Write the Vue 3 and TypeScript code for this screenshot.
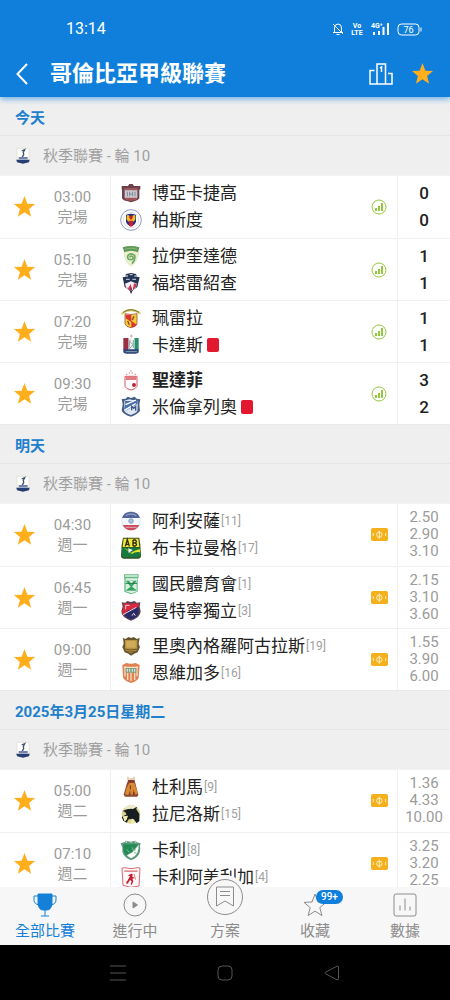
<script setup lang="ts">
import { ref } from 'vue'

interface Shape {
  d: string
  fill?: string
  stroke?: string
  width?: number
}

interface Team {
  name: string
  crest: string
  rank?: number
  score?: number
  redCard?: boolean
  winner?: boolean
}

interface Match {
  id: number
  time: string
  status: string
  home: Team
  away: Team
  odds?: string[]
}

interface Day {
  title: string
  matches: Match[]
}

const days: Day[] = [
  {
    title: '今天',
    matches: [
      { id: 1, time: '03:00', status: '完場', home: { name: '博亞卡捷高', crest: 'chico', score: 0 }, away: { name: '柏斯度', crest: 'pasto', score: 0 } },
      { id: 2, time: '05:10', status: '完場', home: { name: '拉伊奎達德', crest: 'equidad', score: 1 }, away: { name: '福塔雷紹查', crest: 'fortaleza', score: 1 } },
      { id: 3, time: '07:20', status: '完場', home: { name: '珮雷拉', crest: 'pereira', score: 1 }, away: { name: '卡達斯', crest: 'caldas', score: 1, redCard: true } },
      { id: 4, time: '09:30', status: '完場', home: { name: '聖達菲', crest: 'santafe', score: 3, winner: true }, away: { name: '米倫拿列奧', crest: 'millonarios', score: 2, redCard: true } },
    ],
  },
  {
    title: '明天',
    matches: [
      { id: 5, time: '04:30', status: '週一', home: { name: '阿利安薩', crest: 'alianza', rank: 11 }, away: { name: '布卡拉曼格', crest: 'bucaramanga', rank: 17 }, odds: ['2.50', '2.90', '3.10'] },
      { id: 6, time: '06:45', status: '週一', home: { name: '國民體育會', crest: 'nacional', rank: 1 }, away: { name: '曼特寧獨立', crest: 'medellin', rank: 3 }, odds: ['2.15', '3.10', '3.60'] },
      { id: 7, time: '09:00', status: '週一', home: { name: '里奧內格羅阿古拉斯', crest: 'aguilas', rank: 19 }, away: { name: '恩維加多', crest: 'envigado', rank: 16 }, odds: ['1.55', '3.90', '6.00'] },
    ],
  },
  {
    title: '2025年3月25日星期二',
    matches: [
      { id: 8, time: '05:00', status: '週二', home: { name: '杜利馬', crest: 'tolima', rank: 9 }, away: { name: '拉尼洛斯', crest: 'llaneros', rank: 15 }, odds: ['1.36', '4.33', '10.00'] },
      { id: 9, time: '07:10', status: '週二', home: { name: '卡利', crest: 'cali', rank: 8 }, away: { name: '卡利阿美利加', crest: 'america', rank: 4 }, odds: ['3.25', '3.20', '2.25'] },
    ],
  },
]

const circle = (x: number, y: number, r: number): string =>
  `M${x - r} ${y}a${r} ${r} 0 1 0 ${r * 2} 0a${r} ${r} 0 1 0 ${-r * 2} 0z`

const crests: Record<string, Shape[]> = {
  chico: [
    { d: 'M5 12h19l4-6h10l4 6h19v9l-3 3v25q-4 7-13 8l-12 4-12-4q-12-1-15-8V24l-1-3z', fill: '#70404a' },
    { d: 'M14 20h38v28q-3 5-19 7-16-2-19-7z', fill: '#c9ccd2' },
    { d: 'M14 20h38v5H14zM14 47h38q-3 7-19 9-16-2-19-9z', fill: '#a35156' },
    { d: 'M22 29v14M29 29v14M38 29v14M45 29v14M29 36h9', stroke: '#7d8798', width: 3 },
  ],
  pasto: [
    { d: circle(33, 33, 31), fill: '#fff', stroke: '#8d9ac0', width: 3 },
    { d: circle(33, 33, 23), stroke: '#c9d0e4', width: 2 },
    { d: 'M18 18q15-7 30 0v20q-4 11-15 14-11-3-15-14z', fill: '#23337f' },
    { d: 'M20 19h7l6 9 6-9h7v12q-4 9-13 9t-13-9z', fill: '#f2c21d' },
    { d: 'M28 20h10v7l-5 6-5-6zM27 35h12v15l-6 3-6-3z', fill: '#c81f37' },
  ],
  equidad: [
    { d: 'M12 20Q15 54 33 63q17-7 23-42-21-8-44-1z', fill: '#eef1cf', stroke: '#d8dfb2', width: 2 },
    { d: 'M8 7q24-8 50 0l-4 15q-21-9-41 0z', fill: '#5e9a58' },
    { d: 'M15 12q17-5 36 0', stroke: '#a1c490', width: 2 },
    { d: 'M42 30q-12-8-19 3-1 12 10 11 9-2 5-9-6-4-9 2M43 29q6 12-7 27', stroke: '#6eaa65', width: 5 },
  ],
  fortaleza: [
    { d: 'M18 6l15-3 15 3 3 8 8 2-4 16-3 13-13 10-6 9-5-9-14-10-6-29 9-2z', fill: '#243451' },
    { d: 'M15 12h9M29 8h9M43 12h9M18 22h11M37 22h11', stroke: '#a7b9d5', width: 4 },
    { d: 'M15 35l18-7 18 7-4 13-14 9-14-9z', fill: '#f4eff4' },
    { d: 'M15 41l9 8 8-13 4 16-3 7M42 34l9 2-5 12-8 5z', fill: '#cd3853' },
    { d: 'M33 47v18', stroke: '#3b4962', width: 3 },
  ],
  pereira: [
    { d: 'M2 19Q32-7 64 19l-5 3Q31 3 6 23z', fill: '#d4cd69' },
    { d: 'M10 16Q32 0 57 16', stroke: '#776a34', width: 3 },
    { d: 'M15 20q18 5 36 0v31q-3 9-18 11-15-2-18-11z', fill: '#f3cd2f', stroke: '#8f3437', width: 2 },
    { d: 'M17 23l17 1v17l16 12q-3 6-16 8V45L17 34z', fill: '#d93638' },
    { d: 'M42 28l-5 11M23 42l5 11', stroke: '#8e3e32', width: 4 },
  ],
  caldas: [
    { d: 'M10 12h16v36H10z', fill: '#9b3044' },
    { d: 'M43 12h13v36H43z', fill: '#288e6e' },
    { d: 'M26 13h17v34H26z', fill: '#f1f3f1' },
    { d: 'M10 46h46v9q-2 4-10 4H20q-8 0-10-4z', fill: '#2f407c' },
    { d: 'M27 20l12 12-12 14M40 18v24M30 17l-3 24M17 53h34', stroke: '#83a8a7', width: 3 },
    { d: 'M34 2v9M30 6h8', stroke: '#ca8a91', width: 2 },
  ],
  santafe: [
    { d: 'M15 22h36v30q-3 8-18 11-15-3-18-11z', fill: '#fff', stroke: '#d55962', width: 3 },
    { d: 'M17 24h32v9H17z', fill: '#e07c82' },
    { d: circle(42, 48, 6), fill: '#b72938' },
    { d: 'M18 16h4M26 12h4M35 12h4M44 16h4M33 3v5M25 28v4M33 28v4M41 28v4', stroke: '#df7a80', width: 3 },
  ],
  millonarios: [
    { d: 'M5 9l12-1 6-6 10 4 11-4 6 6 11 2-3 15 2 20q-7 10-27 17Q12 56 5 44l3-19z', fill: '#465d86' },
    { d: 'M13 14l15-4 26 6-2 30q-5 7-19 11-15-4-20-13z', fill: '#dfe8f4' },
    { d: 'M15 15h38v8L17 44l-5-2 4-18z', fill: '#4b70ac' },
    { d: 'M17 26l31-14M13 43l34-20', stroke: '#fff', width: 4 },
    { d: 'M35 43v-12l6 6 6-6v13', stroke: '#3b5889', width: 4 },
  ],
  alianza: [
    { d: circle(33, 33, 28), fill: '#f5f8fb', stroke: '#d3dce8', width: 2 },
    { d: 'M6 24Q12 5 33 5t27 19z', fill: '#51649b' },
    { d: 'M8 45h50q-8 16-25 16T8 45z', fill: '#cf4b57' },
    { d: 'M17 17q16-10 32 0M17 52h33', stroke: '#d8deec', width: 2 },
    { d: circle(33, 33, 7), fill: '#aac3dc', stroke: '#6785ac', width: 2 },
  ],
  bucaramanga: [
    { d: 'M9 2h49l3 21 2 34q-1 8-9 8H12q-8 0-9-8l2-34z', fill: '#35511f' },
    { d: 'M11 5h44l3 25H8z', fill: '#f3e532' },
    { d: 'M7 32h52l2 25q-2 4-7 4H12q-5 0-7-4z', fill: '#167b40' },
    { d: 'M7 33q16 0 28 18 12-8 25-5v-9q-20 4-28 12Q20 35 7 33z', fill: '#ece12f' },
    { d: 'M16 28l6-20 6 20M17 22h10M39 9v18M39 9h7q6 4 0 9h-7M46 18q7 5 0 9h-7', stroke: '#272b1d', width: 4 },
    { d: 'M25 34l13 5-12 9z', fill: '#fff' },
  ],
  nacional: [
    { d: 'M12 4h44v10h-3v42l-20 8-20-8V14h-1z', fill: '#65b982' },
    { d: 'M15 7h38v4H15zM17 16h34v39l-17 6-17-6z', fill: '#dbf0e2' },
    { d: 'M18 23h32v30H18z', fill: '#33a261' },
    { d: 'M18 23l14 18-14 11zM50 23L36 41l14 11zM27 23h14l-7 12z', fill: '#d9eddc' },
    { d: 'M17 31h34', stroke: '#197c44', width: 3 },
  ],
  medellin: [
    { d: 'M5 7l11 1 6-5 11 3 11-3 6 5 11-1-2 13 3 14q0 18-29 28Q4 52 4 34L8 20z', fill: '#594052' },
    { d: 'M9 10h15l9 3 9-3h15l-2 12 1 15-30-7-17 14q-5-10 2-25z', fill: '#d8293f' },
    { d: 'M56 21v17q-4 14-23 20-13-4-19-12l12-15z', fill: '#272b68' },
    { d: 'M17 16h12M17 16v12M9 44l40-22M36 47l5-7 5 7', stroke: '#f7d4d9', width: 3 },
  ],
  aguilas: [
    { d: 'M9 8l7 4 10-6 7 3 8-3 10 6 8-4-3 19 4 9-7 16q-11 4-20 10-8-7-19-10L7 36l4-10z', fill: '#66552c' },
    { d: 'M15 15h37v28q-2 7-19 12-17-5-18-12z', fill: '#b99243' },
    { d: 'M19 18h28v20H19z', fill: '#d0ad5a' },
    { d: 'M13 42q18 6 40 0M17 49q14 4 30 0', stroke: '#6b5526', width: 3 },
  ],
  envigado: [
    { d: 'M7 9l12-6q14 4 28 0l12 6-3 38q-2 9-23 16Q11 56 9 46z', fill: '#df8153' },
    { d: 'M12 16h42M15 13v30M33 30v28M51 13v30M23 32v22M44 32v22', stroke: '#f5dfc0', width: 4 },
    { d: 'M17 18h32v14H17z', fill: '#7ca28a' },
    { d: 'M22 21v8M29 21v8M37 21v8M44 21v8', stroke: '#edf0df', width: 3 },
  ],
  tolima: [
    { d: 'M25 12h18l3 9 9 36-3 5H15l-4-6 10-35z', fill: '#8d4a30' },
    { d: 'M28 21l-8 14-5 20 10 2 5-14 3 14 7-2-1-16 7 17 8-4-11-31z', fill: '#d98a33' },
    { d: 'M24 14q10 6 19 0M31 28v12M41 48v9', stroke: '#7b2c2b', width: 3 },
    { d: 'M24 2v10M42 2v10M28 9h11', stroke: '#d7a071', width: 3 },
  ],
  llaneros: [
    { d: circle(33, 34, 28), fill: '#d9d78d' },
    { d: 'M15 13q18-15 38 2l-8 9-27-1z', fill: '#eceacc' },
    { d: 'M8 24q16-8 31-6l12-7-2 8 9 14v21l-8 7-9-13-15 1-6 10-10-6-5-11 15-8-5-7z', fill: '#171d20' },
    { d: 'M8 40l16-2-4 12-6 6zM36 46l9 13-14 3z', fill: '#f2ebac' },
  ],
  cali: [
    { d: 'M2 13l13-4 2-4 15 3 15-3 3 5 12 3-2 8q5 32-27 43Q3 53 7 25z', fill: '#5b997d' },
    { d: 'M10 16h44l-18 24-19 9Q8 37 10 16z', fill: '#238c54' },
    { d: 'M56 18q2 29-22 40-8-3-13-9l16-9z', fill: '#fafdf9' },
    { d: 'M19 5v7M33 5v7M46 5v7', stroke: '#c8ddd1', width: 3 },
    { d: 'M36 25l5 11M42 41l7 1M20 31l8 9M47 31l-4 6', stroke: '#8cb8a2', width: 3 },
  ],
  america: [
    { d: 'M6 6l8-1 19 3 20-3 7 1-3 54-24 4L9 58z', fill: '#fff8f8', stroke: '#d36b72', width: 3 },
    { d: 'M13 13h40v5H13z', fill: '#df8b91' },
    { d: 'M33 23l5 1-1 8 8 4-8 2 3 8-5 11-3-2 3-9-5-4-7 11-5-1 9-16 3-6-7-1z', fill: '#c51f2f' },
    { d: 'M42 24l5 17M19 46l3 8', stroke: '#ca5059', width: 2 },
  ],
}

const starPath = 'M12 1l3 8 8 .4-6.200 5.200 2.100 8L12 18.100 5.100 22.600l2.100-8L1 9.400 9 9z'

const favourites = ref<Set<number>>(new Set(days.flatMap((day) => day.matches.map((m) => m.id))))
const leagueFavourite = ref(true)
const activeTab = ref('all')

function toggle(id: number): void {
  const next = new Set(favourites.value)
  if (next.has(id)) next.delete(id)
  else next.add(id)
  favourites.value = next
}

const tabs = [
  { id: 'all', label: '全部比賽' },
  { id: 'live', label: '進行中' },
  { id: 'plan', label: '方案' },
  { id: 'saved', label: '收藏' },
  { id: 'data', label: '數據' },
]
</script>

<template>
  <div class="screen">
    <header class="header">
      <div class="status">
        <time class="clock">13:14</time>
        <div class="indicators">
          <svg class="bell" viewBox="0 0 12 14" aria-hidden="true">
            <path d="M2.500 10V6q0-4 3.500-4t3.500 4v4M1 10.500h10M4.500 12.500h3M1 2l10 10" />
          </svg>
          <svg class="volte" viewBox="0 0 12 14" aria-hidden="true">
            <text x="6" y="6" text-anchor="middle">Vo</text>
            <text x="6" y="13" text-anchor="middle">LTE</text>
          </svg>
          <svg class="signal" viewBox="0 0 20 14" aria-hidden="true">
            <text x="1" y="6">4G⁺</text>
            <path d="M4 13v-3M9 13V9M13.500 13V5M18 13V1" />
          </svg>
          <svg class="battery" viewBox="0 0 25 13" aria-hidden="true">
            <rect x="1" y="1" width="21" height="11" rx="3.500" />
            <path d="M24 4.500v4" />
            <text x="11.500" y="10" text-anchor="middle">76</text>
          </svg>
        </div>
      </div>
      <div class="app-bar">
        <button class="icon-button back" type="button" aria-label="返回">
          <svg viewBox="0 0 12 22"><path d="M11 1L1.500 11 11 21" /></svg>
        </button>
        <h1>哥倫比亞甲級聯賽</h1>
        <button class="icon-button podium" type="button" aria-label="積分榜">
          <svg viewBox="0 0 24 22">
            <path d="M8 21V1h8.500v20M5.500 7.500H1V21h22V10.500h-4M11 5l1.500-1v5" />
          </svg>
        </button>
        <button
          class="icon-button star"
          :class="{ off: !leagueFavourite }"
          type="button"
          aria-label="收藏聯賽"
          :aria-pressed="leagueFavourite"
          @click="leagueFavourite = !leagueFavourite"
        >
          <svg viewBox="0 0 24 24"><path :d="starPath" /></svg>
        </button>
      </div>
    </header>

    <main class="feed">
      <section v-for="day in days" :key="day.title">
        <h2>{{ day.title }}</h2>
        <h3>
          <svg class="league-logo" viewBox="0 0 42 51" aria-hidden="true">
            <path d="M3 4h36v36H3z" fill="#fff" stroke="#dddccb" stroke-width="2" />
            <path d="M17 12l9-4-4 8 1 7-5 9" fill="none" stroke="#43546d" stroke-width="4" />
            <path d="M8 30h27v7H8z" fill="#7182ab" stroke="none" />
            <path d="M1 38h40l-2 8-18 4-18-4z" fill="#273e75" stroke="none" />
          </svg>
          秋季聯賽 - 輪 10
        </h3>
        <ul class="matches">
          <li v-for="match in day.matches" :key="match.id" class="match">
            <button
              class="icon-button star"
              :class="{ off: !favourites.has(match.id) }"
              type="button"
              aria-label="收藏比賽"
              :aria-pressed="favourites.has(match.id)"
              @click="toggle(match.id)"
            >
              <svg viewBox="0 0 24 24"><path :d="starPath" /></svg>
            </button>
            <div class="when">
              <time>{{ match.time }}</time>
              <span>{{ match.status }}</span>
            </div>
            <div class="teams">
              <div v-for="team in [match.home, match.away]" :key="team.name" class="team">
                <svg class="crest" viewBox="0 0 66 66" aria-hidden="true">
                  <path
                    v-for="(shape, i) in crests[team.crest]"
                    :key="i"
                    :d="shape.d"
                    :fill="shape.fill ?? 'none'"
                    :stroke="shape.stroke ?? 'none'"
                    :stroke-width="shape.width ?? 0"
                  />
                </svg>
                <span class="name" :class="{ winner: team.winner }">{{ team.name }}</span>
                <small v-if="team.rank" class="rank">[{{ team.rank }}]</small>
                <span v-if="team.redCard" class="red-card"></span>
              </div>
            </div>
            <div class="info">
              <svg v-if="match.odds" class="ticket" viewBox="0 0 51 39" aria-hidden="true">
                <rect width="51" height="39" rx="5" fill="#f5b01e" stroke="none" />
                <circle cx="25" cy="20" r="8" />
                <path d="M25 8v24M7 15v9M44 15v9" />
              </svg>
              <svg v-else class="stats" viewBox="0 0 16 16" aria-hidden="true">
                <circle cx="8" cy="8" r="7" />
                <path d="M5 12V9M8 12V7M11 12V4" />
              </svg>
            </div>
            <div v-if="match.odds" class="odds">
              <span v-for="odd in match.odds" :key="odd">{{ odd }}</span>
            </div>
            <div v-else class="scores">
              <span>{{ match.home.score }}</span>
              <span>{{ match.away.score }}</span>
            </div>
          </li>
        </ul>
      </section>
    </main>

    <nav class="tabs">
      <button
        v-for="tab in tabs"
        :key="tab.id"
        class="tab"
        :class="{ active: activeTab === tab.id }"
        type="button"
        @click="activeTab = tab.id"
      >
        <span class="tab-icon">
          <svg v-if="tab.id === 'all'" viewBox="0 0 24 24">
            <path class="solid" d="M5 1h14v10q-1 6-5 6h-4q-4 0-5-6z" />
            <path d="M5 3H1v4q0 4 5 5M19 3h4v4q0 4-5 5M12 16v7M8 23h8" />
          </svg>
          <svg v-else-if="tab.id === 'live'" viewBox="0 0 24 24">
            <circle cx="12" cy="12" r="11" />
            <path class="solid" d="M10 9v6l4.500-3z" />
          </svg>
          <svg v-else-if="tab.id === 'plan'" class="plan" viewBox="0 0 44 44">
            <circle class="disc" cx="22" cy="22" r="22" />
            <circle cx="22" cy="22" r="17.500" />
            <path d="M13.500 12h17v19l-8.500-5-8.500 5zM17 16.500h10M17 20.500h10" />
          </svg>
          <svg v-else-if="tab.id === 'saved'" viewBox="0 0 24 24">
            <path :d="starPath" />
          </svg>
          <svg v-else viewBox="0 0 24 24">
            <rect x="1" y="1" width="22" height="22" rx="2" />
            <path d="M7 17.500v-5M12 17.500v-12M17 17.500v-4" />
          </svg>
          <span v-if="tab.id === 'saved'" class="badge">99+</span>
        </span>
        <span>{{ tab.label }}</span>
      </button>
    </nav>

    <div class="system">
      <button type="button" aria-label="最近使用">
        <svg viewBox="0 0 16 16"><path d="M0 1h16M0 8h16M0 15h16" /></svg>
      </button>
      <button type="button" aria-label="主畫面">
        <svg viewBox="0 0 16 16"><rect x="1" y="1" width="14" height="14" rx="4" /></svg>
      </button>
      <button type="button" aria-label="上一頁">
        <svg viewBox="0 0 16 16"><path d="M1.500 7.200L13 1.200q1.500-.5 1.500 1v11.600q0 1.500-1.500 1L1.500 8.800q-1-.8 0-1.600z" /></svg>
      </button>
    </div>
  </div>
</template>

<style>
body {
  margin: 0;
}
</style>

<style scoped>
.screen {
  display: flex;
  flex-direction: column;
  height: 100vh;
  overflow: hidden;
  background: #fff;
  color: #222;
  font-family: Roboto, "Noto Sans CJK TC", sans-serif;
}

button {
  padding: 0;
  border: 0;
  background: none;
  color: inherit;
  font: inherit;
  cursor: pointer;
}

svg {
  display: block;
  fill: none;
  stroke: currentColor;
}

.header {
  position: relative;
  z-index: 1;
  flex: none;
  background: #0f7fdb;
  box-shadow: 0 2px 6px #0f7fdb99;
  color: #fff;
}

.status {
  display: flex;
  align-items: center;
  justify-content: space-between;
  padding: 18px 28px 10px 66px;
  line-height: 22px;
}

.clock {
  font-size: 16px;
}

.indicators {
  display: flex;
  align-items: center;
  gap: 7px;
}

.indicators text {
  fill: #fff;
  stroke: none;
  font-size: 7px;
  font-weight: 700;
}

.bell {
  width: 12px;
  height: 14px;
}

.volte {
  width: 12px;
  height: 14px;
}

.signal {
  width: 20px;
  height: 14px;
  stroke-width: 2;
}

.battery {
  width: 25px;
  height: 13px;
}

.indicators .battery text {
  font-size: 9px;
  font-weight: 400;
}

.app-bar {
  display: flex;
  align-items: center;
  padding: 0 16px;
  height: 47px;
}

h1 {
  flex: 1;
  margin: 0 0 0 22px;
  font-size: 22px;
  font-weight: 700;
  line-height: 30px;
}

.icon-button {
  display: grid;
  place-items: center;
}

.back svg {
  width: 12px;
  height: 22px;
  stroke-width: 2;
}

.podium {
  margin-right: 18px;
}

.podium svg {
  width: 24px;
  height: 22px;
  stroke-width: 1.500;
}

.star svg {
  width: 23px;
  height: 23px;
  stroke: none;
  fill: #ffae1c;
}

.star.off svg {
  fill: none;
  stroke: #9b9b9b;
}

.feed {
  flex: 1;
  min-height: 0;
  overflow: hidden;
}

h2,
h3 {
  box-sizing: border-box;
  height: 39px;
  margin: 0;
  background: #efefef;
  font-size: 15px;
}

h2 {
  padding: 4px 15px 0;
  border-bottom: 1px solid #e6e6e6;
  color: #2080cc;
  font-weight: 700;
  line-height: 34px;
}

h3 {
  display: flex;
  align-items: center;
  gap: 13px;
  padding: 0 16px;
  color: #a0a0a0;
  font-weight: 400;
  line-height: 38px;
}

.league-logo {
  width: 14px;
  height: 17px;
}

.matches {
  margin: 0;
  padding: 0;
  border-top: 1px solid #f2f2f2;
  border-bottom: 1px solid #e9e9e9;
  list-style: none;
}

.match {
  display: grid;
  grid-template-columns: 48px 49px 1fr 36px 53px;
  box-sizing: border-box;
  height: 62px;
  padding-bottom: 1px;
}

.match + .match {
  padding-bottom: 0;
  border-top: 1px solid #f0f0f0;
}

.when {
  display: flex;
  flex-direction: column;
  align-items: center;
  justify-content: center;
  color: #9b9b9b;
  font-size: 15px;
  line-height: 20px;
}

.teams {
  display: flex;
  flex-direction: column;
  justify-content: center;
  min-width: 0;
  margin-left: 13px;
  padding-left: 9px;
  border-left: 1px solid #eee;
}

.team {
  display: flex;
  align-items: center;
  height: 27px;
  font-size: 17px;
  line-height: 27px;
  white-space: nowrap;
}

.crest {
  flex: none;
  width: 22px;
  height: 22px;
  margin-right: 10px;
}

.winner {
  font-weight: 700;
}

.rank {
  margin-left: 1px;
  color: #a0a0a0;
  font-size: 12px;
}

.red-card {
  width: 12px;
  height: 14px;
  margin-left: 4px;
  border-radius: 2px;
  background: #e2182f;
}

.info {
  display: grid;
  place-items: center;
}

.ticket {
  width: 17px;
  height: 13px;
  stroke: #fff0bd;
  stroke-width: 3;
}

.stats {
  width: 16px;
  height: 16px;
  stroke: #92c83e;
}

.stats path {
  stroke-width: 2;
}

.scores,
.odds {
  display: flex;
  flex-direction: column;
  align-items: center;
  justify-content: center;
  border-left: 1px solid #f0f0f0;
}

.scores {
  font-size: 17px;
  font-weight: 500;
  line-height: 27px;
}

.odds {
  color: #9b9b9b;
  font-size: 15px;
  line-height: 17px;
}

.tabs {
  position: relative;
  z-index: 1;
  display: grid;
  grid-template-columns: repeat(5, 1fr);
  flex: none;
  background: #f7f7f7;
}

.tab {
  display: flex;
  flex-direction: column;
  align-items: center;
  gap: 4px;
  padding: 6px 0 4px;
  color: #8c8c8c;
  font-size: 15px;
  line-height: 20px;
}

.tab.active {
  color: #1580d8;
}

.tab-icon {
  position: relative;
  width: 24px;
  height: 24px;
}

.tab-icon .solid {
  fill: currentColor;
}

.tab-icon .plan {
  position: absolute;
  bottom: -2px;
  left: -10px;
  width: 44px;
  height: 44px;
}

.disc {
  fill: #f7f7f7;
  stroke: none;
}

.badge {
  position: absolute;
  top: -3px;
  left: 13px;
  padding: 0 5px;
  border-radius: 7px;
  background: #0f7fdb;
  color: #fff;
  font-size: 10px;
  font-weight: 500;
  line-height: 14px;
}

.system {
  display: flex;
  flex: none;
  padding: 0 64px;
  background: #000;
  color: #555;
}

.system button {
  display: grid;
  flex: 1;
  place-items: center;
  height: 55px;
}

.system svg {
  width: 16px;
  height: 16px;
}
</style>
